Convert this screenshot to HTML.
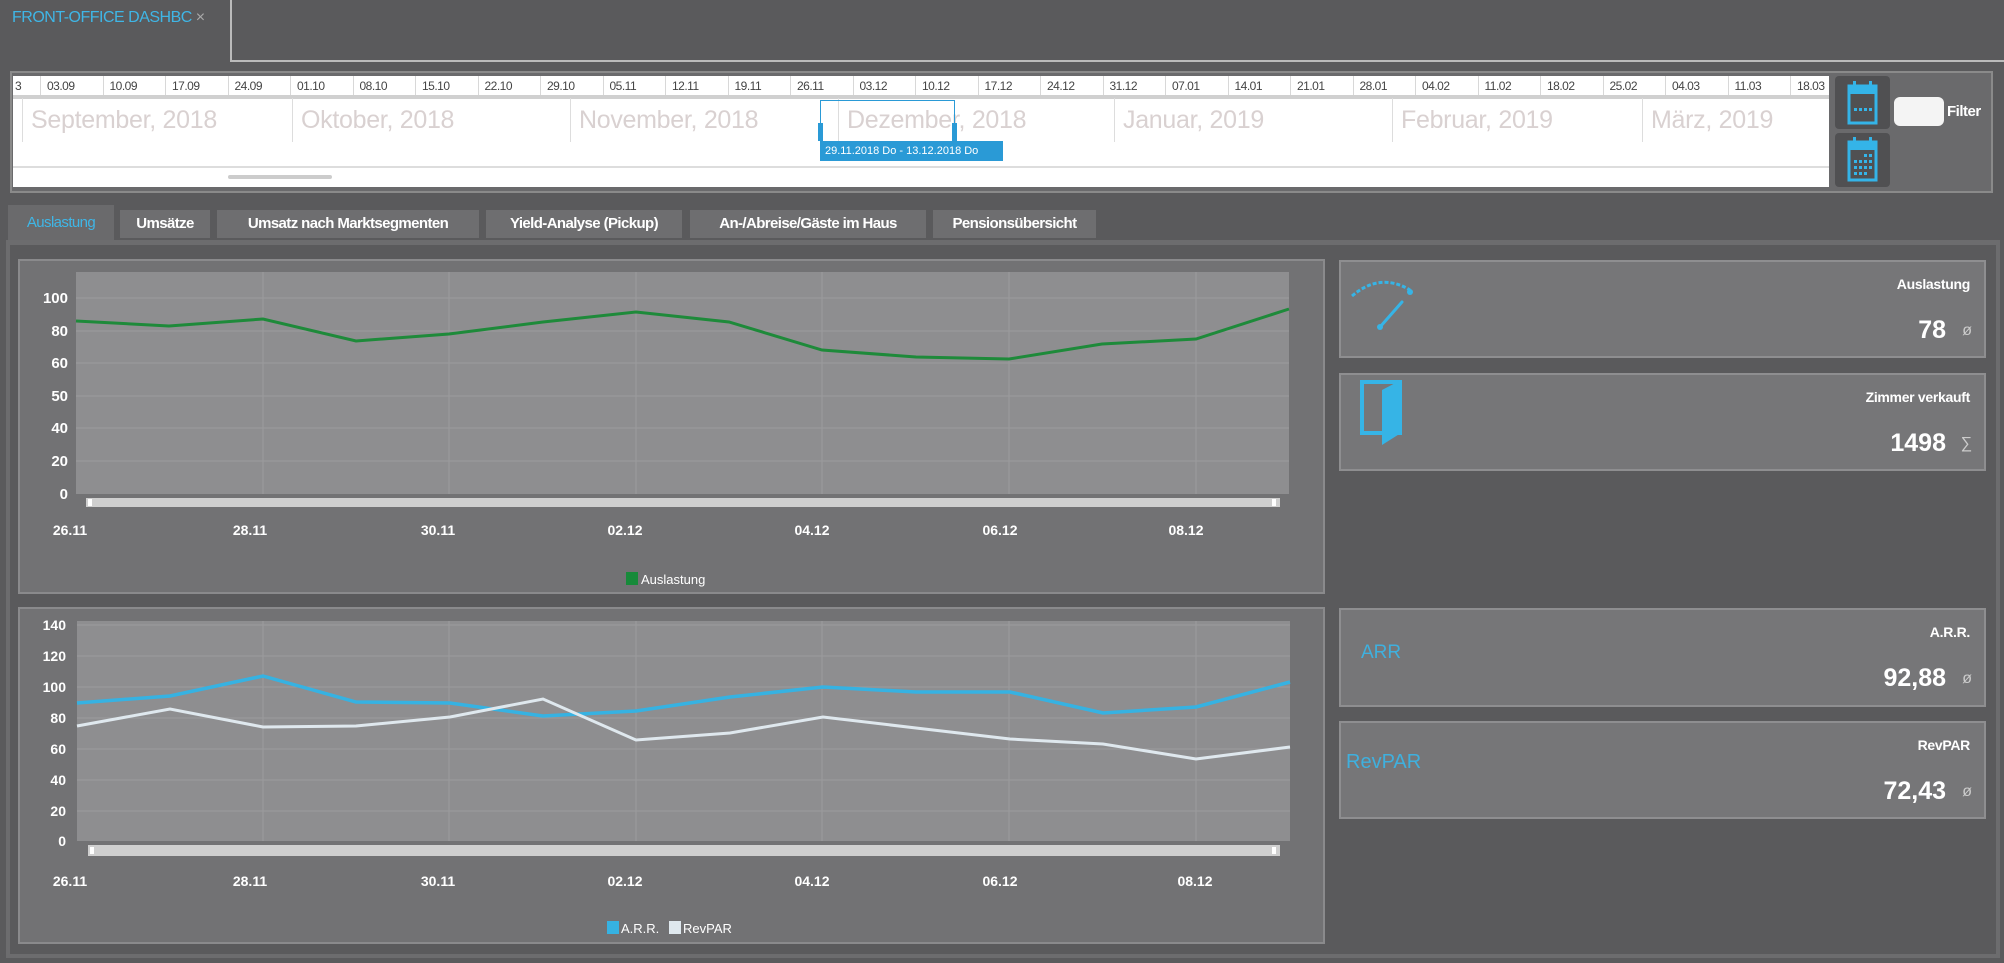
<!DOCTYPE html>
<html><head><meta charset="utf-8">
<style>
*{margin:0;padding:0;box-sizing:border-box}
body{width:2004px;height:963px;background:#5a5a5c;font-family:"Liberation Sans",sans-serif;position:relative;overflow:hidden}
.a{position:absolute}
.dc{position:absolute;top:0;height:19px;width:62.5px;border-left:1px solid #d8d8d8;font-size:12px;color:#444;padding:3px 0 0 6px;letter-spacing:-0.5px}
.mn{position:absolute;top:22px;font-size:25px;color:#d9d1d1;padding-left:8px;border-left:1px solid #ddd;height:44px;line-height:44px;letter-spacing:-0.3px}
.tab{position:absolute;top:210px;height:28px;background:#6e6e70;color:#fff;font-size:15px;line-height:28px;text-align:center;font-weight:bold;letter-spacing:-0.6px}
.card{position:absolute;left:1339px;width:647px;background:#767678;border:2px solid #8e8e90}
.ct{position:absolute;right:14px;top:14px;color:#fff;font-size:14px;font-weight:bold;letter-spacing:-0.3px}
.cv{position:absolute;right:38px;top:54px;color:#fff;font-size:25px;font-weight:bold}
.cs{position:absolute;right:12px;top:60px;color:#ccc;font-size:16px}
</style></head><body>
<div class="a" style="left:0;top:0;width:232px;height:62px;border-right:2px solid #bbb;background:#5a5a5c"></div>
<div class="a" style="left:232px;top:60px;width:1772px;height:2px;background:#bbb"></div>
<div class="a" style="left:12px;top:9px;color:#3fb6e6;font-size:16px;letter-spacing:-0.5px">FRONT-OFFICE DASHBC <span style="color:#aaa">×</span></div>

<div class="a" style="left:10px;top:71px;width:1983px;height:122px;background:#6a6a6c;border:2px solid #8a8a8a"></div>
<div class="a" style="left:13px;top:76px;width:1816px;height:111px;background:#fff;overflow:hidden">
  <div class="a" style="left:0;top:0;width:1816px;height:19px;">
    <div class="dc" style="left:-33px;padding-left:34px">3</div>
    <div class="dc" style="left:27px">03.09</div><div class="dc" style="left:89.5px">10.09</div><div class="dc" style="left:152px">17.09</div><div class="dc" style="left:214.5px">24.09</div><div class="dc" style="left:277px">01.10</div><div class="dc" style="left:339.5px">08.10</div><div class="dc" style="left:402px">15.10</div><div class="dc" style="left:464.5px">22.10</div><div class="dc" style="left:527px">29.10</div><div class="dc" style="left:589.5px">05.11</div><div class="dc" style="left:652px">12.11</div><div class="dc" style="left:714.5px">19.11</div><div class="dc" style="left:777px">26.11</div><div class="dc" style="left:839.5px">03.12</div><div class="dc" style="left:902px">10.12</div><div class="dc" style="left:964.5px">17.12</div><div class="dc" style="left:1027px">24.12</div><div class="dc" style="left:1089.5px">31.12</div><div class="dc" style="left:1152px">07.01</div><div class="dc" style="left:1214.5px">14.01</div><div class="dc" style="left:1277px">21.01</div><div class="dc" style="left:1339.5px">28.01</div><div class="dc" style="left:1402px">04.02</div><div class="dc" style="left:1464.5px">11.02</div><div class="dc" style="left:1527px">18.02</div><div class="dc" style="left:1589.5px">25.02</div><div class="dc" style="left:1652px">04.03</div><div class="dc" style="left:1714.5px">11.03</div><div class="dc" style="left:1777px">18.03</div>
  </div>
  <div class="a" style="left:0;top:19px;width:1816px;height:4px;background:#d0d0d0"></div>
  <div class="mn" style="left:9px">September, 2018</div>
  <div class="mn" style="left:279px">Oktober, 2018</div>
  <div class="mn" style="left:557px">November, 2018</div>
  <div class="mn" style="left:825px">Dezember, 2018</div>
  <div class="mn" style="left:1101px">Januar, 2019</div>
  <div class="mn" style="left:1379px">Februar, 2019</div>
  <div class="mn" style="left:1629px">März, 2019</div>
  <div class="a" style="left:807px;top:24px;width:135px;height:41px;border:1px solid #2a9ad6;border-bottom:none"></div>
  <div class="a" style="left:805px;top:47px;width:5px;height:18px;background:#2a9ad6"></div>
  <div class="a" style="left:939px;top:47px;width:5px;height:18px;background:#2a9ad6"></div>
  <div class="a" style="left:807px;top:65px;width:183px;height:20px;background:#2a9ad6;color:#fff;font-size:11px;line-height:20px;padding-left:5px">29.11.2018 Do - 13.12.2018 Do</div>
  <div class="a" style="left:0;top:90px;width:1816px;height:2px;background:#ddd"></div>
  <div class="a" style="left:215px;top:99px;width:104px;height:4px;background:#ccc;border-radius:2px"></div>
</div>
<div class="a" style="left:1835px;top:76px;width:55px;height:53px;background:#505052;border-radius:4px"></div>
<div class="a" style="left:1835px;top:133px;width:55px;height:54px;background:#505052;border-radius:4px"></div>
<svg class="a" style="left:1835px;top:76px" width="55" height="111">
 <g fill="none" stroke="#34b4e8" stroke-width="3">
  <rect x="14" y="10" width="27" height="37"/><rect x="14" y="66" width="27" height="38"/>
 </g>
 <g fill="#34b4e8">
  <rect x="14" y="10" width="27" height="8"/><rect x="18" y="5" width="3" height="8"/><rect x="34" y="5" width="3" height="8"/>
  <rect x="19" y="32" width="3" height="3"/><rect x="24" y="32" width="3" height="3"/><rect x="29" y="32" width="3" height="3"/><rect x="34" y="32" width="3" height="3"/>
  <rect x="14" y="66" width="27" height="8"/><rect x="18" y="61" width="3" height="8"/><rect x="34" y="61" width="3" height="8"/>
  <g id="r"><rect x="29" y="78" width="3" height="3"/><rect x="34" y="78" width="3" height="3"/></g>
  <rect x="19" y="84" width="3" height="3"/><rect x="24" y="84" width="3" height="3"/><rect x="29" y="84" width="3" height="3"/><rect x="34" y="84" width="3" height="3"/>
  <rect x="19" y="90" width="3" height="3"/><rect x="24" y="90" width="3" height="3"/><rect x="29" y="90" width="3" height="3"/><rect x="34" y="90" width="3" height="3"/>
  <rect x="19" y="96" width="3" height="3"/><rect x="24" y="96" width="3" height="3"/><rect x="29" y="96" width="3" height="3"/>
 </g>
</svg>
<div class="a" style="left:1894px;top:97px;width:50px;height:29px;background:#f4f4f4;border-radius:6px"></div>
<div class="a" style="left:1947px;top:103px;color:#fff;font-weight:bold;font-size:15px;letter-spacing:-0.5px">Filter</div>

<div class="tab" style="left:8px;top:205px;height:35px;width:106px;color:#3fb6e6;font-weight:normal;background:#6a6a6c;line-height:36px">Auslastung</div>
<div class="tab" style="left:120px;width:90px">Umsätze</div>
<div class="tab" style="left:217px;width:262px">Umsatz nach Marktsegmenten</div>
<div class="tab" style="left:486px;width:196px">Yield-Analyse (Pickup)</div>
<div class="tab" style="left:690px;width:236px">An-/Abreise/Gäste im Haus</div>
<div class="tab" style="left:933px;width:163px">Pensionsübersicht</div>

<div class="a" style="left:6px;top:240px;width:1994px;height:718px;border:4px solid #6c6c6e;border-top-width:5px"></div>

<svg class="a" style="left:0;top:0" width="2004" height="963" font-family="Liberation Sans, sans-serif">
 <rect x="19" y="260" width="1305" height="333" fill="#727274" stroke="#8a8a8c" stroke-width="2"/>
 <rect x="76" y="272" width="1213" height="222" fill="#8e8e90"/>
 <g stroke="#9c9c9e" stroke-width="1">
  <line x1="76" y1="298" x2="1289" y2="298"/><line x1="76" y1="331" x2="1289" y2="331"/><line x1="76" y1="363" x2="1289" y2="363"/><line x1="76" y1="396" x2="1289" y2="396"/><line x1="76" y1="428" x2="1289" y2="428"/><line x1="76" y1="461" x2="1289" y2="461"/>
  <line x1="263" y1="272" x2="263" y2="494"/><line x1="449" y1="272" x2="449" y2="494"/><line x1="636" y1="272" x2="636" y2="494"/><line x1="822" y1="272" x2="822" y2="494"/><line x1="1009" y1="272" x2="1009" y2="494"/><line x1="1196" y1="272" x2="1196" y2="494"/>
 </g>
 <polyline fill="none" stroke="#1e8a3a" stroke-width="3" points="76,321 169,326 263,319 356,341 449,334 543,322 636,312 729,322 822,350 916,357 1009,359 1102,344 1196,339 1289,309"/>
 <g fill="#fff" font-weight="bold" font-size="15" text-anchor="end">
  <text x="68" y="303">100</text><text x="68" y="336">80</text><text x="68" y="368">60</text><text x="68" y="401">50</text><text x="68" y="433">40</text><text x="68" y="466">20</text><text x="68" y="499">0</text>
 </g>
 <rect x="86" y="498" width="1194" height="9" fill="#cfcfcf"/><rect x="88" y="499" width="4" height="7" fill="#fff"/><rect x="1272" y="499" width="4" height="7" fill="#fff"/>
 <g fill="#fff" font-weight="bold" font-size="14" text-anchor="middle">
  <text x="70" y="535">26.11</text><text x="250" y="535">28.11</text><text x="438" y="535">30.11</text><text x="625" y="535">02.12</text><text x="812" y="535">04.12</text><text x="1000" y="535">06.12</text><text x="1186" y="535">08.12</text>
 </g>
 <rect x="626" y="572" width="12" height="13" fill="#178a3a"/><text x="641" y="584" fill="#fff" font-size="13">Auslastung</text>

 <rect x="19" y="608" width="1305" height="335" fill="#727274" stroke="#8a8a8c" stroke-width="2"/>
 <rect x="77" y="621" width="1213" height="220" fill="#8e8e90"/>
 <g stroke="#9c9c9e" stroke-width="1">
  <line x1="77" y1="625" x2="1290" y2="625"/><line x1="77" y1="656" x2="1290" y2="656"/><line x1="77" y1="687" x2="1290" y2="687"/><line x1="77" y1="718" x2="1290" y2="718"/><line x1="77" y1="749" x2="1290" y2="749"/><line x1="77" y1="780" x2="1290" y2="780"/><line x1="77" y1="811" x2="1290" y2="811"/>
  <line x1="263" y1="621" x2="263" y2="841"/><line x1="449" y1="621" x2="449" y2="841"/><line x1="636" y1="621" x2="636" y2="841"/><line x1="822" y1="621" x2="822" y2="841"/><line x1="1009" y1="621" x2="1009" y2="841"/><line x1="1196" y1="621" x2="1196" y2="841"/>
 </g>
 <polyline fill="none" stroke="#36b2e2" stroke-width="3.5" points="77,703 170,696 263,676 356,702 450,703 543,716 636,711 730,697 823,687 916,692 1010,692 1103,713 1196,707 1290,682"/>
 <polyline fill="none" stroke="#dfe8ee" stroke-width="3" points="77,726 170,709 263,727 356,726 450,717 543,699 636,740 730,733 823,717 916,728 1010,739 1103,744 1196,759 1290,747"/>
 <g fill="#fff" font-weight="bold" font-size="14" text-anchor="end">
  <text x="66" y="630">140</text><text x="66" y="661">120</text><text x="66" y="692">100</text><text x="66" y="723">80</text><text x="66" y="754">60</text><text x="66" y="785">40</text><text x="66" y="816">20</text><text x="66" y="846">0</text>
 </g>
 <rect x="88" y="845" width="1192" height="11" fill="#cfcfcf"/><rect x="90" y="847" width="4" height="7" fill="#fff"/><rect x="1272" y="847" width="4" height="7" fill="#fff"/>
 <g fill="#fff" font-weight="bold" font-size="14" text-anchor="middle">
  <text x="70" y="886">26.11</text><text x="250" y="886">28.11</text><text x="438" y="886">30.11</text><text x="625" y="886">02.12</text><text x="812" y="886">04.12</text><text x="1000" y="886">06.12</text><text x="1195" y="886">08.12</text>
 </g>
 <rect x="607" y="921" width="12" height="13" fill="#36b2e2"/><text x="621" y="933" fill="#fff" font-size="13">A.R.R.</text>
 <rect x="669" y="921" width="12" height="13" fill="#dfe8ee"/><text x="683" y="933" fill="#fff" font-size="13">RevPAR</text>
</svg>

<div class="card" style="top:260px;height:98px">
 <div class="ct">Auslastung</div><div class="cv">78</div><div class="cs">ø</div>
</div>
<div class="card" style="top:373px;height:98px">
 <div class="ct">Zimmer verkauft</div><div class="cv">1498</div><div class="cs">∑</div>
</div>
<div class="card" style="top:608px;height:99px">
 <div class="ct">A.R.R.</div><div class="cv">92,88</div><div class="cs">ø</div>
 <div class="a" style="left:20px;top:32px;color:#3fb0de;font-size:19px">ARR</div>
</div>
<div class="card" style="top:721px;height:98px">
 <div class="ct">RevPAR</div><div class="cv">72,43</div><div class="cs">ø</div>
 <div class="a" style="left:5px;top:28px;color:#3fb0de;font-size:20px">RevPAR</div>
</div>
<svg class="a" style="left:1340px;top:270px" width="90" height="190">
 <path d="M12 26 Q40 2 70 20" fill="none" stroke="#36b4e6" stroke-width="3" stroke-dasharray="4 2"/>
 <circle cx="70" cy="22" r="3" fill="#36b4e6"/>
 <line x1="62" y1="32" x2="40" y2="57" stroke="#36b4e6" stroke-width="3" stroke-linecap="round"/>
 <circle cx="40" cy="57" r="3" fill="#36b4e6"/>
 <rect x="22" y="112" width="38" height="51" fill="none" stroke="#36b4e6" stroke-width="4"/>
 <polygon points="42,120 61,110 61,163 42,175" fill="#36b4e6"/>
</svg>
</body></html>
